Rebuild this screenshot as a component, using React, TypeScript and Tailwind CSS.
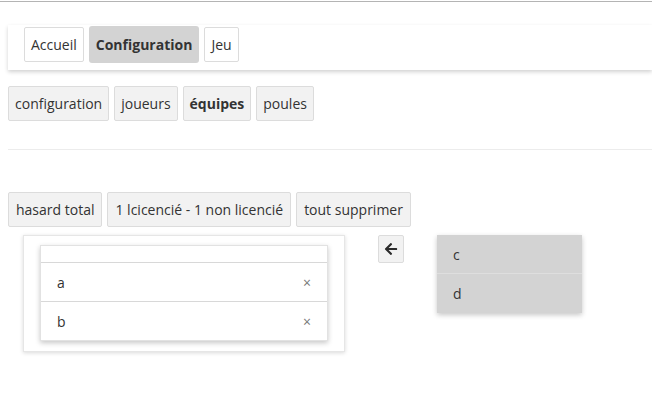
import React from "react";

const base =
  "h-[35px] border border-[#dcdcdc] bg-[#f2f2f2] rounded-[2px] flex items-center text-[14px] text-[#333] whitespace-nowrap";
const btn = base + " px-[6px]";
const btn3 = base + " px-[7px]";

function Arrow() {
  return (
    <svg width="14" height="14" viewBox="0 0 448 512" fill="#2b2b2b">
      <path d="M257.5 445.1l-22.2 22.2c-9.4 9.4-24.6 9.4-33.9 0L7 273c-9.4-9.4-9.4-24.6 0-33.9L201.4 44.7c9.4-9.4 24.6-9.4 33.9 0l22.2 22.2c9.5 9.5 9.3 25-.4 34.3L136.6 216H424c13.3 0 24 10.7 24 24v32c0 13.3-10.7 24-24 24H136.6l120.5 114.8c9.8 9.3 10 24.8.4 34.3z" />
    </svg>
  );
}

export default function App() {
  return (
    <div className="font-['Open_Sans',sans-serif] text-[#333] bg-white w-[652px] h-[413px] overflow-hidden">
      <div className="mt-px h-px bg-[#b4b4b4]" />
      <div className="pl-2">
        <div className="mt-[23px] h-[45px] bg-white shadow-[0_2px_4px_rgba(0,0,0,0.18)] pl-4 pt-[2px] flex gap-[5px] items-start">
          <div className="h-[35px] px-[6px] border border-[#dcdcdc] bg-white rounded-[2px] flex items-center text-[14px]">Accueil</div>
          <div className="h-[37px] -mt-px px-[7px] bg-[#d3d3d3] rounded-[3px] flex items-center text-[14px] font-bold">Configuration</div>
          <div className="h-[35px] px-[6px] border border-[#dcdcdc] bg-white rounded-[2px] flex items-center text-[14px]">Jeu</div>
        </div>

        <div className="mt-4 flex gap-[5px]">
          <div className={btn}>configuration</div>
          <div className={btn}>joueurs</div>
          <div className={btn + " font-bold"}>équipes</div>
          <div className={btn}>poules</div>
        </div>

        <div className="mt-[28px] h-px bg-[#ececec]" />

        <div className="mt-[42px] flex gap-[5px]">
          <div className={btn3}>hasard total</div>
          <div className={btn3}>1 lcicencié - 1 non licencié</div>
          <div className={btn3}>tout supprimer</div>
        </div>

        <div className="mt-[8px] flex items-start">
          <div className="ml-[15px] w-[322px] bg-white border border-[#e6e6e6] shadow-[0_1px_4px_rgba(0,0,0,0.15)] pt-[9px] pb-[10px] px-[16px]">
            <div className="bg-white border border-[#e2e2e2] shadow-[0_2px_5px_rgba(0,0,0,0.22)]">
              <div className="h-[17px] border-b border-[#d8d8d8]" />
              <div className="h-[39px] border-b border-[#d8d8d8] flex items-center justify-between pl-[16px] pr-[16px] text-[14px]">
                <span>a</span>
                <span className="text-[#777] text-[14px]">×</span>
              </div>
              <div className="h-[38px] flex items-center justify-between pl-[16px] pr-[16px] text-[14px]">
                <span>b</span>
                <span className="text-[#777] text-[14px]">×</span>
              </div>
            </div>
          </div>

          <div className="ml-[33px] w-[26px] h-[28px] border border-[#dcdcdc] bg-[#f2f2f2] rounded-[2px] flex items-center justify-center">
            <Arrow />
          </div>

          <div className="ml-[33px] w-[145px] bg-[#d3d3d3] shadow-[0_2px_5px_rgba(0,0,0,0.22)] text-[14px]">
            <div className="h-[39px] border-b border-[#dedede] flex items-center pl-[16px]">c</div>
            <div className="h-[39px] flex items-center pl-[16px]">d</div>
          </div>
        </div>
      </div>
    </div>
  );
}
